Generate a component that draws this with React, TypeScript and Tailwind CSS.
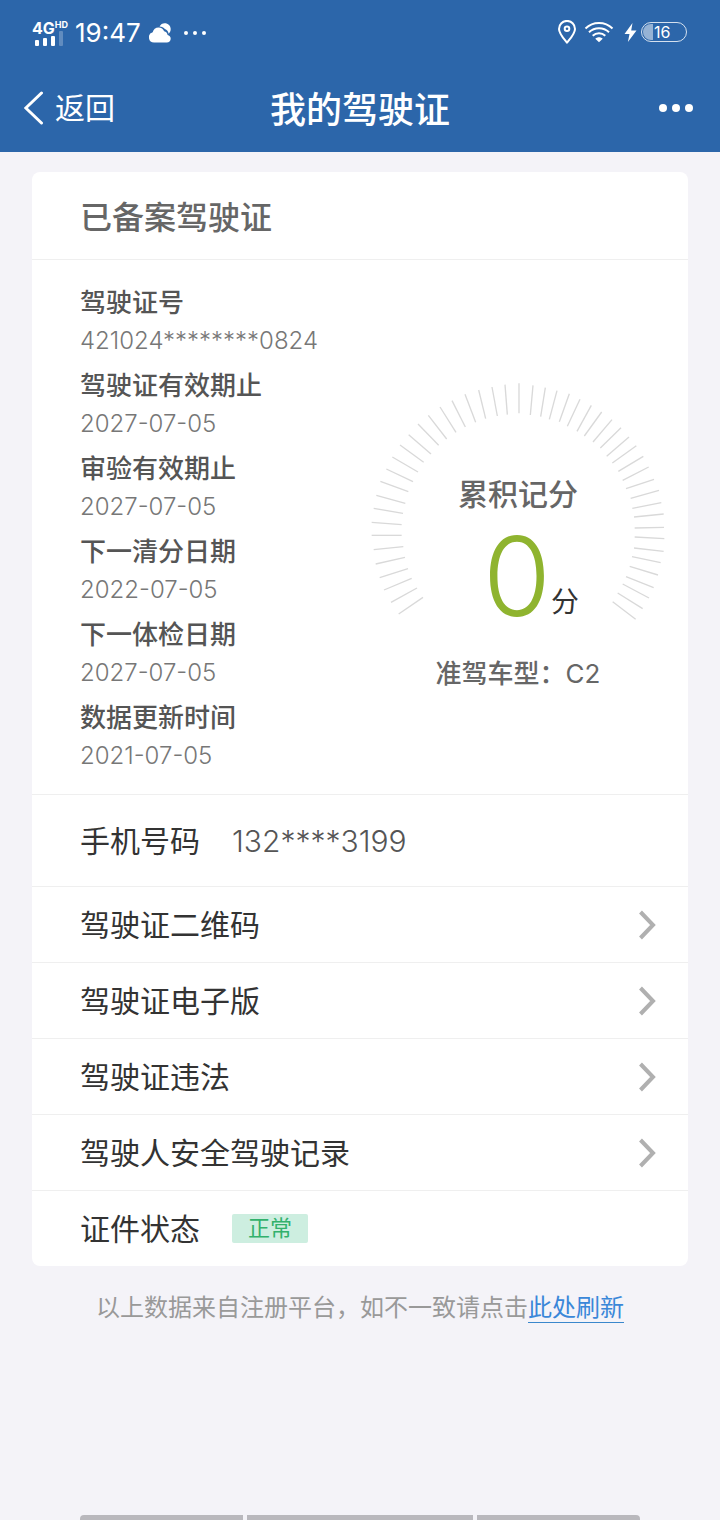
import React from 'react';

const details = [
  { label: '驾驶证号', value: '421024********0824' },
  { label: '驾驶证有效期止', value: '2027-07-05' },
  { label: '审验有效期止', value: '2027-07-05' },
  { label: '下一清分日期', value: '2022-07-05' },
  { label: '下一体检日期', value: '2027-07-05' },
  { label: '数据更新时间', value: '2021-07-05' },
];

const links = [
  { name: '驾驶证二维码', href: '#qrcode' },
  { name: '驾驶证电子版', href: '#electronic' },
  { name: '驾驶证违法', href: '#violations' },
  { name: '驾驶人安全驾驶记录', href: '#records' },
];

// Dial ticks, clockwise from bottom left: outer point, inner point
const ticks = [
  [147, 733, 220, 683], [124, 698, 202, 655], [103, 661, 186, 626], [90, 624, 175, 597],
  [78, 583, 166, 563], [72, 540, 161, 531], [66, 497, 156, 497], [66, 458, 156, 465],
  [72, 416, 160, 431], [80, 377, 167, 401], [92, 335, 176, 366], [110, 298, 190, 336],
  [128, 262, 205, 307], [151, 226, 222, 278], [177, 195, 244, 253], [205, 163, 267, 227],
  [236, 137, 291, 208], [271, 112, 319, 188], [307, 93, 347, 172], [346, 74, 378, 158],
  [387, 61, 408, 147], [427, 52, 443, 139], [466, 45, 473, 135], [508, 41, 508, 131],
  [550, 47, 542, 136], [587, 54, 573, 141], [622, 63, 599, 149], [659, 72, 629, 156],
  [691, 89, 653, 170], [725, 107, 682, 185], [756, 127, 704, 199], [787, 150, 730, 217],
  [814, 174, 752, 235], [838, 202, 771, 260], [860, 228, 788, 280], [881, 260, 806, 305],
  [897, 292, 819, 332], [913, 329, 829, 357], [928, 362, 843, 386], [935, 399, 848, 416],
  [942, 433, 853, 442], [943, 473, 855, 475], [944, 507, 855, 502], [942, 545, 853, 535],
  [933, 579, 847, 561], [925, 616, 840, 590], [912, 654, 829, 621], [898, 685, 819, 643],
  [879, 717, 804, 670], [858, 749, 789, 696],
];

const StatusBar = () => (
  <div className="flex h-16 items-center justify-between pl-8 pr-[33px]">
    <div className="flex items-center pt-[2px]">
      <div className="w-[35px]">
        <div className="flex items-start font-bold">
          <span className="text-[16px] leading-[14px]">4G</span>
          <span className="text-[9px] leading-[8px]">HD</span>
        </div>
        <svg className="overflow-visible" width="32" height="11" viewBox="0 0 32 11" fill="currentColor">
          <rect x="3" y="5" width="4" height="6" rx="1" />
          <rect x="11" y="3" width="4" height="8" rx="1" />
          <rect x="19" y="1" width="4" height="10" rx="1" />
          <rect x="27" y="-4" width="4" height="15" rx="1" opacity="0.25" />
        </svg>
      </div>
      <span className="ml-2 text-[26px] leading-8">19:47</span>
      <svg className="ml-2" width="23" height="20" viewBox="0 0 23 20" fill="currentColor">
        <path d="M10.500 3.600C11.600 1.500 13.400.3 15.700.3c3.400 0 6 2.600 6 5.800 0 2-.8 3.700-2.100 4.700-.3-2.500-1.700-4.100-3.700-4.700C14.700 4.500 12.800 3.600 10.500 3.600Z" />
        <path d="M5.200 19.500a5.200 5.200 0 0 1-1.500-10.200C4.200 6.400 6.600 4.400 9.600 4.400c2.700 0 4.700 1.500 5.500 3.900 2 .4 3.300 1.900 3.500 3.700 1.800.2 3.100 1.800 3.100 3.700 0 2.100-1.700 3.800-3.800 3.800Z" />
      </svg>
      <svg className="ml-3" width="22" height="4" viewBox="0 0 22 4" fill="currentColor">
        <circle cx="2" cy="2" r="2" />
        <circle cx="11" cy="2" r="2" />
        <circle cx="20" cy="2" r="2" />
      </svg>
    </div>

    <div className="flex items-center">
      <svg width="18" height="24" viewBox="0 0 18 24" fill="none" stroke="currentColor" strokeWidth="2">
        <path d="M9 22.700C6 18.800 1 13.500 1 8.900a8 8 0 0 1 16 0c0 4.600-5 9.900-8 13.800Z" strokeLinejoin="round" />
        <circle cx="9" cy="8.800" r="2.300" />
      </svg>
      <svg className="ml-2" width="30" height="21" viewBox="0 0 30 21" fill="none" stroke="currentColor" strokeWidth="2">
        <path d="M1.500 6.500C9-.7 21-.7 28.500 6.500" />
        <path d="M5 10.200c5.600-5.400 14.400-5.400 20 0" />
        <path d="M8.700 13.800c3.600-3.400 9-3.400 12.600 0" />
        <path d="M11.300 16.700c2-2 5.400-2 7.400 0L15 20.300Z" fill="currentColor" stroke="none" />
      </svg>
      <svg className="ml-[10px]" width="13" height="19" viewBox="0 0 13 19" fill="currentColor">
        <path d="M8.500 0 .5 11h5l-1.600 8L12.500 7.600H7.200Z" />
      </svg>
      <div className="ml-1 flex h-5 w-[46px] items-center gap-px overflow-hidden rounded-full border border-white/80 p-px">
        <span className="h-4 w-[10px] shrink-0 rounded-l-full bg-white/50" />
        <span className="text-[16px] leading-5">16</span>
      </div>
    </div>
  </div>
);

const ScoreDial = () => (
  <div className="grid w-[294px] justify-items-center">
    <svg className="col-start-1 row-start-1" width="294" height="238" viewBox="64 40 882 714" stroke="#d9d9d9" strokeWidth="4">
      {ticks.map(([x1, y1, x2, y2]) => (
        <line key={`${x1}-${y1}`} x1={x1} y1={y1} x2={x2} y2={y2} />
      ))}
    </svg>
    <div className="col-start-1 row-start-1 flex flex-col items-center pt-[91px]">
      <p className="text-[30px] font-medium leading-10 text-[#666]">累积记分</p>
      <p className="mt-5 flex items-end pl-[26px]">
        <span className="text-[110px] font-light leading-[84px] text-[#8fb42f]">0</span>
        <span className="text-[28px] leading-8 text-[#333]">分</span>
      </p>
      <p className="mt-9 text-[26px] font-medium leading-10 text-[#666]">
        准驾车型：<span className="font-normal">C2</span>
      </p>
    </div>
  </div>
);

const App = () => {
  return (
    <div className="flex min-h-screen flex-col bg-[#f4f3f8] font-['Inter','Noto_Sans_CJK_SC',sans-serif] text-[#333]">
      <header className="bg-[#2c66aa] text-white">
        <StatusBar />
        <nav className="grid h-[88px] grid-cols-[1fr_auto_1fr] items-center px-6">
          <button className="flex items-center gap-[11px] text-[30px] leading-10">
            <svg width="20" height="34" viewBox="0 0 20 34" fill="none" stroke="currentColor" strokeWidth="3" strokeLinecap="round">
              <path d="M17.500 2 1.800 17l15.700 15" />
            </svg>
            返回
          </button>
          <h1 className="pt-1 text-[36px] font-medium leading-10">我的驾驶证</h1>
          <button className="justify-self-end" aria-label="更多">
            <svg width="40" height="10" viewBox="0 0 40 10" fill="currentColor">
              <circle cx="7" cy="5" r="4" />
              <circle cx="20" cy="5" r="4" />
              <circle cx="33" cy="5" r="4" />
            </svg>
          </button>
        </nav>
      </header>

      <main className="px-8 pt-5">
        <div className="divide-y divide-[#efefef] rounded-lg bg-white">
          <h2 className="h-[88px] px-12 pt-[26px] text-[32px] font-medium leading-10 text-[#666]">已备案驾驶证</h2>

          <div className="flex justify-between pb-[19px] pl-12 pr-[23px] pt-6">
            <dl className="flex flex-col gap-[7px] leading-[38px]">
              {details.map((item) => (
                <div key={item.label}>
                  <dt className="text-[26px] font-medium text-[#555]">{item.label}</dt>
                  <dd className="text-[24px] font-light text-[#777]">{item.value}</dd>
                </div>
              ))}
            </dl>
            <div className="pt-[99px]">
              <ScoreDial />
            </div>
          </div>

          {/* Phone number */}
          <div className="flex h-[92px] items-center gap-8 px-12 text-[30px] leading-10">
            <span>手机号码</span>
            <span className="font-light text-[#555]">132****3199</span>
          </div>

          {links.map((link) => (
            <a key={link.name} href={link.href} className="flex h-[76px] items-center justify-between pl-12 pr-8 text-[30px] leading-10">
              {link.name}
              <svg width="18" height="30" viewBox="0 0 18 30" fill="none" stroke="#b0b0b0" strokeWidth="4">
                <path d="M2.500 2 15 15 2.500 28" />
              </svg>
            </a>
          ))}

          <div className="flex h-[75px] items-center gap-8 px-12 text-[30px] leading-10">
            <span>证件状态</span>
            <span className="rounded-xs bg-[#cdeee0] px-4 text-[22px] leading-[29px] text-[#32b16c]">正常</span>
          </div>
        </div>

        <p className="mt-[26px] text-center text-[24px] leading-8 text-[#999]">
          以上数据来自注册平台，如不一致请点击
          <a href="#refresh" className="border-b border-[#3a87cc] text-[#3a87d8]">此处刷新</a>
        </p>
      </main>

      {/* Gesture bar */}
      <div className="mt-auto flex h-[5px] justify-center gap-1 px-20">
        <span className="flex-[163] rounded-tl bg-[#b9b8bd]" />
        <span className="flex-[226] bg-[#b9b8bd]" />
        <span className="flex-[163] rounded-tr bg-[#b9b8bd]" />
      </div>
    </div>
  );
};

export default App;
